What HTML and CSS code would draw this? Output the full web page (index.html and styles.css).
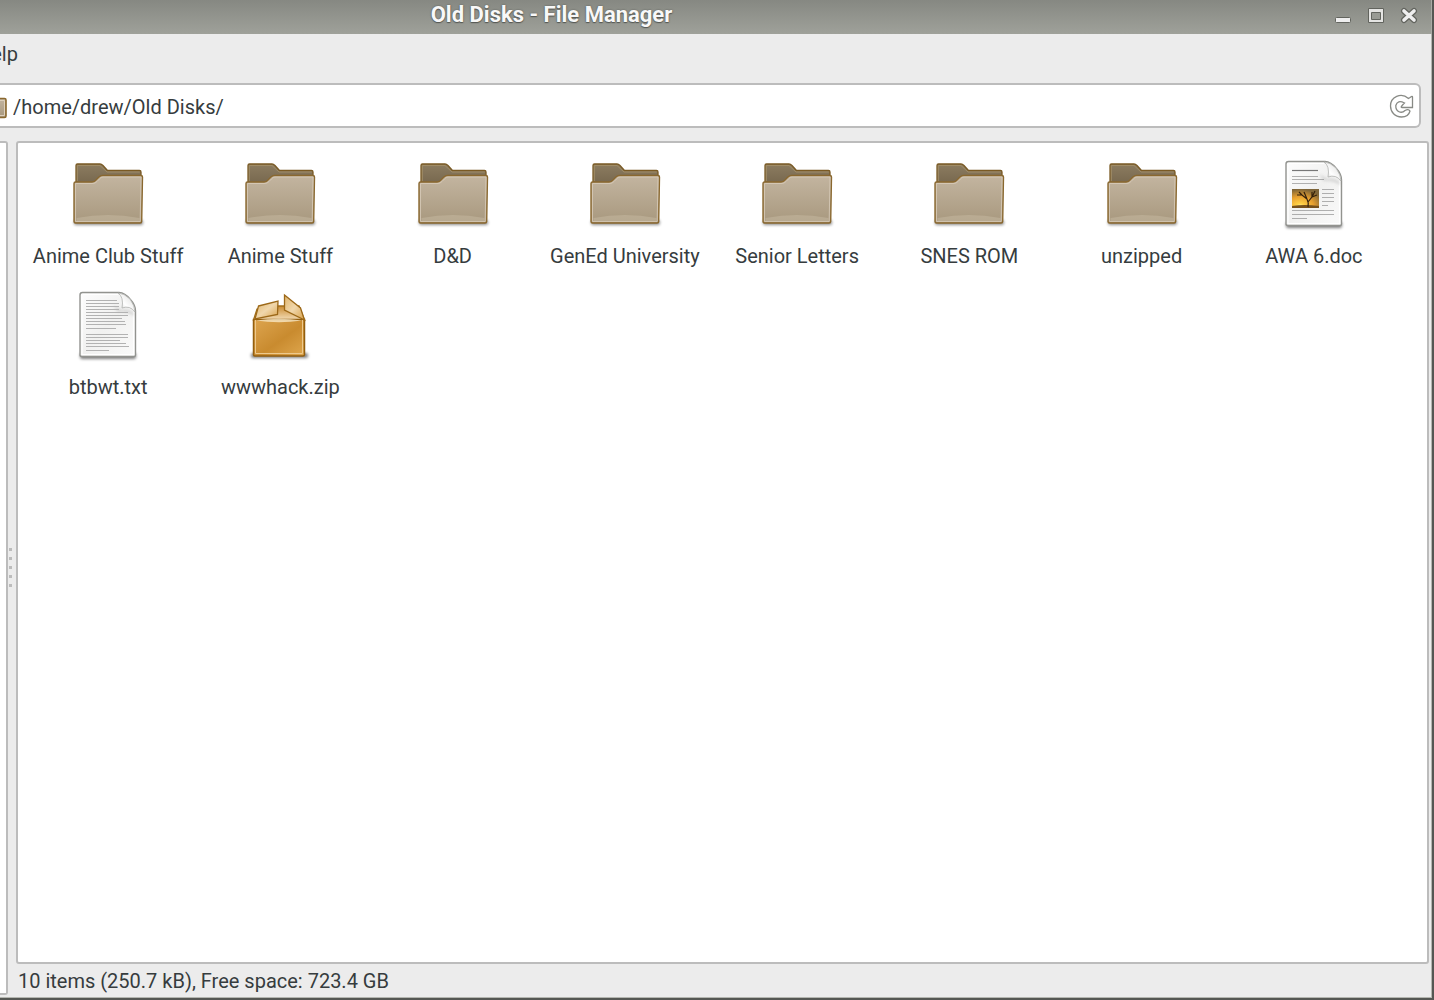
FILE: index.html
```html
<!DOCTYPE html>
<html lang="en">
<head>
<meta charset="utf-8">
<title>Old Disks - File Manager</title>
<link rel="stylesheet" href="styles.css">
</head>
<body>
<svg class="defs" aria-hidden="true">
  <defs>
    <linearGradient id="tan" x1="0" y1="0" x2="0" y2="1"><stop offset="0" stop-color="#c3b5a0"/><stop offset="1" stop-color="#a8987e"/></linearGradient>
    <linearGradient id="brown" x1="0" y1="0" x2="0" y2="1"><stop offset="0" stop-color="#8c7c60"/><stop offset="1" stop-color="#6f6048"/></linearGradient>
    <linearGradient id="paper" x1="0" y1="0" x2="1" y2="1"><stop offset="0" stop-color="#fdfdfd"/><stop offset=".5" stop-color="#f1f1f0"/><stop offset="1" stop-color="#fafafa"/></linearGradient>
    <linearGradient id="curl" x1="0" y1="1" x2="1" y2="0"><stop offset="0" stop-color="#c4c4c2"/><stop offset=".4" stop-color="#ffffff"/><stop offset="1" stop-color="#d8d8d6"/></linearGradient>
    <linearGradient id="box" x1="0" y1="0" x2="1" y2="1"><stop offset="0" stop-color="#dda550"/><stop offset=".55" stop-color="#c98b2f"/><stop offset="1" stop-color="#dfa74e"/></linearGradient>
    <linearGradient id="flap" x1="0" y1="0" x2="1" y2="1"><stop offset="0" stop-color="#e0b56c"/><stop offset=".5" stop-color="#f0d7ac"/><stop offset="1" stop-color="#d9a24a"/></linearGradient>
    <linearGradient id="inside" x1="0" y1="0" x2="0" y2="1"><stop offset="0" stop-color="#c98a30"/><stop offset="1" stop-color="#f4deb8"/></linearGradient>
    <radialGradient id="sunset" cx=".3" cy=".9" r=".9"><stop offset="0" stop-color="#fff3a0"/><stop offset=".15" stop-color="#ffd045"/><stop offset=".55" stop-color="#e8a030"/><stop offset="1" stop-color="#7d6438"/></radialGradient>
    <filter id="soft" x="-20%" y="-200%" width="140%" height="500%"><feGaussianBlur stdDeviation="1.5"/></filter>
    <symbol id="folder" viewBox="0 0 80 80">
      <rect x="6" y="65" width="69" height="5" rx="2" fill="#000" opacity=".45" filter="url(#soft)"/>
      <path d="M8 36V10.500Q8 9 9.500 9H32Q33.500 9 35 10.500L39.500 15.500H71.500Q73 15.500 73 17V36Z" fill="url(#brown)" stroke="#7a5a24" stroke-width="1.300"/>
      <path d="M9.300 26V10.500H32L39 17H71.800" fill="none" stroke="#a08c66" stroke-width="1"/>
      <path d="M6 66.500V28.500Q6 27 7.500 27H24Q26 27 27.500 25.500L31 22Q32.500 20.500 34.500 20.500H73Q74.500 20.500 74.500 22L73.700 66.500Q73.700 68 72 68H7.500Q6 68 6 66.500Z" fill="url(#tan)" stroke="#8a682f" stroke-width="1.400"/>
      <path d="M7.500 66.500V28.500H25Q27 28.500 29 26.500L31.500 24Q33 22 35 22H73L72.200 66.500Z" fill="none" stroke="#d8ccba" stroke-width="1" opacity=".8"/>
      <path d="M8.500 63Q40 57 71.500 63V66H8.500Z" fill="#d5c8b2" opacity=".35"/>
    </symbol>
    <symbol id="sheet" viewBox="0 0 80 80">
      <rect x="12" y="67" width="56" height="6" rx="2" fill="#000" opacity=".5" filter="url(#soft)"/>
      <g transform="translate(0 -1)">
        <path d="M14.500 7.500H51Q57 8 62 14Q67.500 20 67.500 26V70Q67.500 71.500 66 71.500H14Q12 71.500 12 70V10Q12 7.500 14.500 7.500Z" fill="url(#paper)" stroke="#92938f" stroke-width="1.400"/>
        <path d="M15 9.500H50M14 10V69.500H65.500V27" fill="none" stroke="#fff" stroke-width="1.200"/>
        <path d="M45 20Q52 24 53 25Q60 23 66 28L66 31Q58 26 50 27Z" fill="#777" opacity=".25" filter="url(#soft)"/>
        <path d="M50 8Q56 12 54 23Q62 20 67 27Q67 21 62 14Q56 8 50 8Z" fill="url(#curl)" stroke="#b0b1ae" stroke-width=".8"/>
      </g>
    </symbol>
    <symbol id="doc" viewBox="0 0 80 80">
      <use href="#sheet" width="80" height="80"/>
      <g transform="translate(0 -1)">
        <g stroke="#777" stroke-width="1.200"><path d="M18 16.500H44"/><path d="M18 22.500H44M18 25.500H50M18 29.500H43M48 35.500H60M48 39.500H60M48 43.500H60M48 47.500H60M48 51.500H54M18 56.500H60M18 60.500H60M18 64.500H33" opacity=".55"/></g>
        <rect x="18" y="35" width="27" height="19" fill="url(#sunset)"/>
        <path d="M18 52Q30 50 45 52V54H18Z" fill="#76501c"/>
        <path d="M34 53Q35 49 33 45L28 41L23 41M33 45L30 38M34 48L38 43L43 41M38 43L38 38M38 43L41 37M28 41L25 38" fill="none" stroke="#33200c" stroke-width="1.200"/>
      </g>
    </symbol>
    <symbol id="text" viewBox="0 0 80 80">
      <use href="#sheet" width="80" height="80"/>
      <path d="M18 14.500H49M18 17.500H51M18 20.500H51M18 23.500H51M18 26.500H60M18 29.500H60M18 32.500H54M18 35.500H57M18 38.500H58M18 42.500H48M18 48.500H60M18 51.500H60M18 54.500H52M18 57.500H58M18 60.500H61M18 64.500H41" stroke="#b2b2b2" stroke-width="1"/>
    </symbol>
    <symbol id="archive" viewBox="0 0 80 80">
      <g transform="translate(-1 -1)">
      <rect x="12" y="68" width="57" height="5" rx="2" fill="#000" opacity=".5" filter="url(#soft)"/>
      <path d="M14.500 35L18 24L38 21H60L65.500 35Z" fill="url(#inside)" stroke="#a26f1c" stroke-width="1.300"/>
      <path d="M14.500 34.500H65.500V69.500Q65.500 71 64 71H16Q14.500 71 14.500 69.500Z" fill="url(#box)" stroke="#935f10" stroke-width="1.500"/>
      <path d="M16.500 35V68.500H63.500V35" fill="none" stroke="#edc98d" stroke-width="1"/>
      <path d="M17 35.500Q40 32 63 35.500Q40 39 17 35.500Z" fill="#fbedcf" opacity=".75"/>
      <path d="M19.500 21L39 16L38.500 29.500L16 34Z" fill="url(#flap)" stroke="#9c6818" stroke-width="1.300"/>
      <path d="M45.500 10L61.500 23L65.500 35L45.500 25Z" fill="url(#flap)" stroke="#9c6818" stroke-width="1.300"/>
      </g>
    </symbol>
  </defs>
</svg>
<div class="window">
  <header class="titlebar">
    <h1 class="title">Old Disks - File Manager</h1>
    <div class="controls">
      <button class="control" aria-label="Minimize"><svg width="24" height="24"><rect x="4.500" y="13.500" width="15" height="5" rx="1" fill="#eee" stroke="#62645e"/></svg></button>
      <button class="control" aria-label="Maximize"><svg width="24" height="24"><path d="M4.500 4.500H19.500V18.500H4.500Z" fill="#e4e4e2" stroke="#62645e"/><path d="M7.500 8.500H16.500V15.500H7.500Z" fill="#989a93" stroke="#62645e"/></svg></button>
      <button class="control" aria-label="Close"><svg width="24" height="24"><g fill="none" stroke-linecap="round"><path d="M7 7L17 16M17 7L7 16" stroke="#62645e" stroke-width="6"/><path d="M7 7L17 16M17 7L7 16" stroke="#eee" stroke-width="3.600"/></g></svg></button>
    </div>
  </header>
  <nav class="menubar"><button class="menu">Help</button></nav>
  <div class="location">
    <svg class="place" width="7" height="22" aria-hidden="true"><rect x="-12" y="1.500" width="18" height="19" rx="1.500" fill="url(#tan)" stroke="#8a682f" stroke-width="1.600"/><path d="M0 3.500H4.500V18.500H0" fill="none" stroke="#ddd0bc"/></svg>
    <input class="path" type="text" value="/home/drew/Old Disks/" aria-label="Location">
    <button class="reload" aria-label="Reload"><svg width="28" height="28"><path d="M20.500 6.500L22 5.500Q24.500 3.500 24.500 5V15.500H14Q12 15.500 15 12.500L16.500 11Q9.500 7.500 7.800 13.500C7.500 20 13.500 22 17 18.500Q20.500 16.500 22 19C21 23 17.500 25 13.500 25C7 25 2.500 20 2.500 14C2.500 5 13 0 20.500 6.500Z" fill="#fff" stroke="#888a85" stroke-width="1.300"/></svg></button>
  </div>
  <div class="panes">
    <aside class="side"></aside>
    <div class="grip"><i></i><i></i><i></i><i></i><i></i></div>
    <main class="content">
      <ul class="files">
        <li class="file"><svg class="icon"><use href="#folder"/></svg><span>Anime Club Stuff</span></li>
        <li class="file"><svg class="icon"><use href="#folder"/></svg><span>Anime Stuff</span></li>
        <li class="file"><svg class="icon"><use href="#folder"/></svg><span>D&amp;D</span></li>
        <li class="file"><svg class="icon"><use href="#folder"/></svg><span>GenEd University</span></li>
        <li class="file"><svg class="icon"><use href="#folder"/></svg><span>Senior Letters</span></li>
        <li class="file"><svg class="icon"><use href="#folder"/></svg><span>SNES ROM</span></li>
        <li class="file"><svg class="icon"><use href="#folder"/></svg><span>unzipped</span></li>
        <li class="file"><svg class="icon"><use href="#doc"/></svg><span>AWA 6.doc</span></li>
        <li class="file"><svg class="icon"><use href="#text"/></svg><span>btbwt.txt</span></li>
        <li class="file"><svg class="icon"><use href="#archive"/></svg><span>wwwhack.zip</span></li>
      </ul>
    </main>
    <footer class="status">10 items (250.7 kB), Free space: 723.4 GB</footer>
  </div>
</div>
</body>
</html>
```
FILE: styles.css
```css
* { box-sizing: border-box; }
body {
  margin: 0;
  font: 20px/24px Roboto, sans-serif;
  color: #363c3e;
  background: #1d3f8f;
}
button, input { font: inherit; color: inherit; border: 0; padding: 0; background: none; }
button svg { display: block; }
.defs { position: absolute; width: 0; height: 0; }
.window {
  display: flex;
  flex-direction: column;
  min-height: 100vh;
  overflow: hidden;
  background: #ececec;
  border-right: 2px solid #555753;
  border-bottom: 2px solid #555753;
  box-shadow: inset -1px -1px #b4b6b0;
}
.titlebar {
  display: flex;
  height: 34px;
  background: linear-gradient(#868882, #9fa19a);
  border-right: 1px solid #a9aba5;
}
.title {
  flex: 1;
  margin: 0;
  font-size: 22px;
  line-height: 30px;
  font-weight: 700;
  text-align: center;
  color: #f8f8f8;
  text-shadow: 0 0 2px #555753, 0 1px 1px #555753;
}
.controls {
  display: flex;
  justify-content: flex-end;
  gap: 9px;
  width: 328px;
  padding: 4px 10px 0 0;
}
.control { width: 24px; height: 24px; }
.menubar { height: 49px; padding-top: 8px; }
.menu { margin-left: -23px; }
.location {
  display: flex;
  align-items: center;
  height: 45px;
  margin-right: 11px;
  background: #fff;
  border: 2px solid #bcbcbc;
  border-left: 0;
  border-radius: 0 6px 6px 0;
}
.path { flex: 1; min-width: 0; height: 28px; margin: 2px 0 0 6px; outline: 0; }
.place { margin-top: 4px; }
.reload { margin-right: 3px; }
.panes {
  flex: 1;
  display: grid;
  grid-template: 1fr 34px / 8px 8px 1fr;
  padding: 13px 3px 0 0;
}
.side {
  grid-row: 1 / 3;
  margin-bottom: 3px;
  background: #fff;
  border: 2px solid #bcbcbc;
  border-left: 0;
  border-radius: 0 3px 3px 0;
}
.grip {
  display: flex;
  flex-direction: column;
  align-items: flex-start;
  justify-content: center;
  gap: 6px;
  padding: 30px 0 0 1px;
}
.grip i { width: 3px; height: 3px; background: #bcbcbc; }
.content {
  background: #fff;
  border: 2px solid #bcbcbc;
  border-radius: 3px;
}
.files {
  display: grid;
  grid-template-columns: repeat(8, 1fr);
  margin: 0;
  padding: 12px 27px 0 4px;
  list-style: none;
}
.file {
  display: flex;
  flex-direction: column;
  align-items: center;
  gap: 9px;
  height: 131px;
  white-space: nowrap;
}
.icon { width: 80px; height: 80px; }
.status { grid-column: 3; padding: 5px 2px; }
```
